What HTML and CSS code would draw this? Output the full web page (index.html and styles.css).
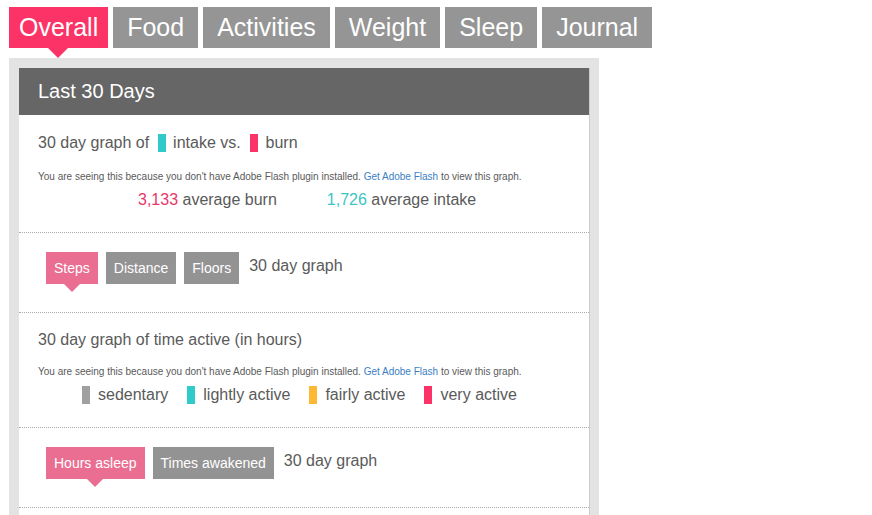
FILE: index.html
```html
<!DOCTYPE html>
<html lang="en">
  <head>
    <meta charset="utf-8" />
    <title>Overall</title>
    <link rel="stylesheet" href="styles.css">
  </head>
  <body>
    <nav class="tabs">
      <a class="tab active" href="#">Overall</a>
      <a class="tab" href="#">Food</a>
      <a class="tab" href="#">Activities</a>
      <a class="tab" href="#">Weight</a>
      <a class="tab" href="#">Sleep</a>
      <a class="tab" href="#">Journal</a>
    </nav>
    <div class="panel">
      <div class="panel-inner">
        <h2 class="panel-title">Last 30 Days</h2>

        <section class="section graph-intake">
          <div class="graph-title">
            30 day graph of
            <span class="swatch teal"></span> intake vs.
            <span class="swatch pink"></span> burn
          </div>
          <p class="flash-note">You are seeing this because you don't have Adobe Flash plugin installed. <a href="#">Get Adobe Flash</a> to view this graph.</p>
          <div class="stats">
            <span><span class="num-pink">3,133</span> average burn</span>
            <span><span class="num-teal">1,726</span> average intake</span>
          </div>
        </section>

        <section class="section switcher">
          <a class="pill active" href="#">Steps</a>
          <a class="pill" href="#">Distance</a>
          <a class="pill" href="#">Floors</a>
          <span class="switcher-label">30 day graph</span>
        </section>

        <section class="section graph-active">
          <div class="graph-title">30 day graph of time active (in hours)</div>
          <p class="flash-note">You are seeing this because you don't have Adobe Flash plugin installed. <a href="#">Get Adobe Flash</a> to view this graph.</p>
          <div class="legend">
            <span class="legend-item"><span class="swatch grey"></span>sedentary</span>
            <span class="legend-item"><span class="swatch teal"></span>lightly active</span>
            <span class="legend-item"><span class="swatch orange"></span>fairly active</span>
            <span class="legend-item"><span class="swatch pink"></span>very active</span>
          </div>
        </section>

        <section class="section switcher">
          <a class="pill active" href="#">Hours asleep</a>
          <a class="pill" href="#">Times awakened</a>
          <span class="switcher-label">30 day graph</span>
        </section>

        <section class="section-end"></section>
      </div>
    </div>
  </body>
</html>
```

FILE: styles.css
```css
html,
body {
  height: 515px;
  overflow: hidden;
}
body {
  margin: 0;
  padding: 7px 0 0 9px;
  box-sizing: border-box;
  font-family: "Liberation Sans", Arial, sans-serif;
  color: #5a5a5a;
  background-color: #fff;
}
a {
  text-decoration: none;
}
.tabs {
  display: flex;
  gap: 5px;
  margin-bottom: 10px;
}
.tab {
  position: relative;
  height: 41px;
  line-height: 41px;
  padding: 0 14px;
  font-size: 25px;
  color: #fff;
  background-color: #959595;
}
.tab.active {
  padding: 0 10px;
  background-color: #fc3366;
}
.tab.active::after {
  content: "";
  position: absolute;
  left: 39px;
  top: 41px;
  border-left: 10px solid transparent;
  border-right: 10px solid transparent;
  border-top: 10px solid #fc3366;
  z-index: 1;
}
.panel {
  width: 590px;
  box-sizing: border-box;
  padding: 10px;
  background-color: #e3e3e3;
}
.panel-inner {
  background-color: #fff;
  box-shadow: 1px 0 0 #ccc;
}
.panel-title {
  margin: 0;
  height: 47px;
  line-height: 47px;
  padding-left: 19px;
  font-size: 20px;
  font-weight: normal;
  color: #fff;
  background-color: #666;
}
.section {
  box-sizing: border-box;
  border-bottom: 1px dotted #aaa;
}
.section-end {
  height: 40px;
}
.graph-intake {
  height: 118px;
  padding: 18px 19px 0;
}
.graph-active {
  height: 115px;
  padding: 17px 19px 0;
}
.graph-title {
  font-size: 16px;
  line-height: 20px;
}
.swatch {
  display: inline-block;
  width: 8px;
  height: 18px;
  margin: 0 3px 0 4px;
  vertical-align: -4px;
}
.swatch + .swatch {
  margin-left: 5px;
}
.teal {
  background-color: #2fcbca;
}
.pink {
  background-color: #fc3366;
}
.orange {
  background-color: #fdb933;
}
.grey {
  background-color: #a0a0a0;
}
.flash-note {
  margin: 15px 0 0;
  font-size: 10px;
  line-height: 14px;
}
.graph-intake .flash-note {
  margin-top: 17px;
}
.flash-note a {
  color: #3a7fc4;
}
.stats {
  display: flex;
  gap: 50px;
  padding-left: 100px;
  margin-top: 6px;
  font-size: 16px;
  line-height: 20px;
}
.num-pink {
  color: #e8366b;
}
.num-teal {
  color: #3cc5c5;
}
.legend {
  display: flex;
  gap: 19px;
  padding-left: 44px;
  margin-top: 6px;
  font-size: 16px;
  line-height: 20px;
}
.legend-item .swatch {
  margin: 0 8px 0 0;
}
.switcher {
  display: flex;
  align-items: flex-start;
  gap: 8px;
  height: 80px;
  padding: 19px 0 0 27px;
}
.pill {
  position: relative;
  height: 32px;
  line-height: 32px;
  padding: 0 8px;
  font-size: 14px;
  color: #fff;
  background-color: #939393;
}
.pill.active {
  background-color: #e96e92;
}
.pill.active::after {
  content: "";
  position: absolute;
  left: 50%;
  top: 32px;
  margin-left: -8px;
  border-left: 8px solid transparent;
  border-right: 8px solid transparent;
  border-top: 8px solid #e96e92;
}
.switcher-label {
  margin-left: 2px;
  font-size: 16px;
  line-height: 28px;
}
```
